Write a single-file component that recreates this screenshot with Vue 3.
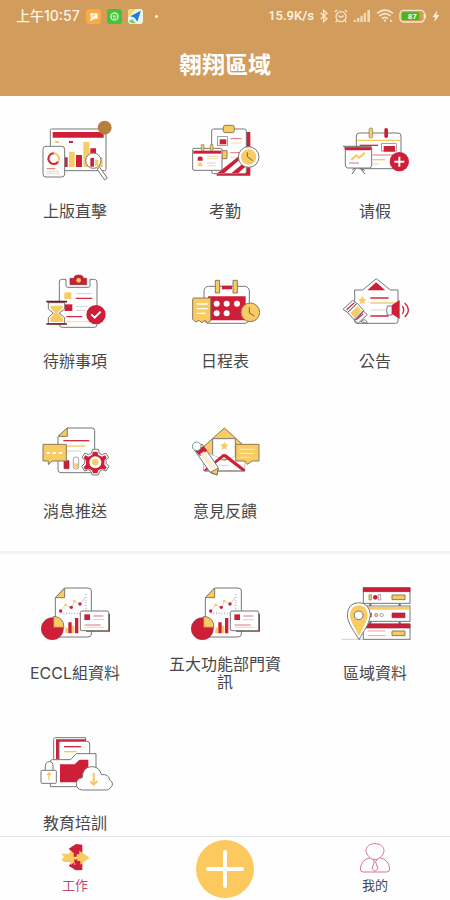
<script setup>
import { ref } from 'vue'

const tab = ref('work')
const reports = ['ECCL組資料', '五大功能部門資訊']
</script>

<template>
  <div class="app">
    <header class="top">
      <div class="status">
        <div class="status-side">
          <span class="clock">上午10:57</span>
          <svg class="chip" viewBox="0 0 42 42" aria-hidden="true">
            <rect width="42" height="42" rx="9" fill="#fbab45" />
            <path d="M11 12h22v15h-8l-9 5-6 2 4-8z" fill="#fff6e6" />
            <path d="M16 21l9-5" stroke="#fbc67c" stroke-width="3" />
          </svg>
          <svg class="chip" viewBox="0 0 42 42" aria-hidden="true">
            <rect width="42" height="42" rx="9" fill="#45c13c" />
            <circle cx="21" cy="21" r="10" fill="none" stroke="#c9f3c0" stroke-width="4" />
            <path d="M16 20h10M17 25h8" stroke="#c9f3c0" stroke-width="3" />
          </svg>
          <svg class="chip" viewBox="0 0 42 42" aria-hidden="true">
            <rect width="42" height="42" rx="9" fill="#eef5ee" />
            <path d="M0 12Q0 0 12 0h10L0 24z" fill="#f3dc62" />
            <path d="M2 34l10-6 10 12H10z" fill="#79cf6e" />
            <path d="M36 5L6 20l12 4 8 12z" fill="#1f7be0" />
          </svg>
          <span class="dot"></span>
        </div>
        <div class="status-side right">
          <span class="speed">15.9K/s</span>
          <svg class="sig bt" viewBox="0 0 30 42" aria-hidden="true">
            <path d="M5 12l19 17-10 9V4l10 9L5 30" />
          </svg>
          <svg class="sig" viewBox="0 0 42 42" aria-hidden="true">
            <circle cx="21" cy="23" r="15" />
            <path d="M13 20l8 5 8-5M2 9l8-6M40 9l-8-6M9 35l-4 5M33 35l4 5" />
          </svg>
          <svg class="bars" viewBox="0 0 54 42" aria-hidden="true">
            <path d="M2 33h7v6H2zM12 27h7v12h-7zM22 20h7v19h-7zM32 12h7v27h-7zM43 3h8v36h-8z" />
          </svg>
          <svg class="sig wifi" viewBox="0 0 54 42" aria-hidden="true">
            <path d="M3 13q24-19 48 0M10 21q17-14 34 0M18 29q9-8 18 0" />
            <path d="M27 30l4 5-4 4-4-4zM44 30l6 8h-9z" class="solid" />
          </svg>
          <svg class="battery" viewBox="0 0 84 42" aria-hidden="true">
            <rect x="3" y="4" width="73" height="35" rx="11" class="case" />
            <path d="M79 15v13" class="case" />
            <rect x="9" y="10" width="52" height="23" rx="4" fill="#49b71c" />
            <text x="40" y="31" text-anchor="middle">87</text>
          </svg>
          <svg class="bolt" viewBox="0 0 24 42" aria-hidden="true">
            <path d="M16 4L2 24h8L7 39l15-21h-9z" />
          </svg>
        </div>
      </div>
      <h1>翱翔區域</h1>
    </header>

    <main>
      <section class="grid">
        <button type="button" class="cell">
          <svg class="icon" viewBox="45 15 240 210" aria-hidden="true">
            <rect x="91" y="57" width="167" height="125" rx="4" class="o" />
            <path d="M98 66h153v17H98z" class="r" />
            <path d="M105 93h12v6h-12zM147 125h17v46h-17zM190 96h18v75h-18z" class="y" />
            <path d="M147 93h12v6h-12zM133 142h10v29h-10zM168 135h18v36h-18zM211 115h17v56h-17z" class="r" />
            <path d="M232 142h16v29h-16z" class="y" />
            <circle cx="220" cy="152" r="23" class="o" />
            <path d="M211 144h11v26h-11z" class="r" /><path d="M225 149h10v18h-10z" class="y" />
            <path d="M231 177l8-5 23 32-8 6z" class="o" />
            <rect x="69" y="109" width="65" height="92" rx="9" class="o" />
            <circle cx="101" cy="146" r="16" class="yl thick" />
            <path d="M101 130a16 16 0 1 0 13 26" class="rl thick" />
            <path d="M80 176h26" class="rl thin" /><path d="M80 184h38M80 190h38" class="yl thin" />
            <circle cx="254" cy="53" r="21" fill="#b77f3d" />
          </svg>
          <span class="label">上版直擊</span>
        </button>

        <button type="button" class="cell">
          <svg class="icon" viewBox="45 15 240 210" aria-hidden="true">
            <path d="M228 66h13v131H140v-8h88z" class="r" />
            <rect x="125" y="57" width="104" height="134" rx="6" class="o" />
            <path d="M143 189l64-51h15l-59 51zM185 189l40-34v17l-20 17z" class="r" />
            <rect x="160" y="46" width="33" height="22" rx="6" class="yo" />
            <rect x="142" y="80" width="30" height="27" class="o thin" /><path d="M149 88h20v15h-20z" class="r" />
            <path d="M153 122h18v24h-18z" class="yo" />
            <path d="M181 86h34M181 128h30" class="rl thin" /><path d="M181 99h34M181 142h20" class="yl thin" />
            <rect x="68" y="115" width="88" height="66" rx="4" class="o" />
            <path d="M70 122h84v9H70z" class="r" />
            <path d="M94 104h8v17h-8zM121 104h8v17h-8z" class="yo thin" />
            <path d="M83 143q7-9 15 0v9H83z" class="r" /><path d="M82 169q8-24 16 0z" class="y" />
            <path d="M111 139h34M111 159h26" class="gl" /><path d="M111 146h34M111 167h26" class="yl thin" />
            <circle cx="236" cy="141" r="31" class="o" /><circle cx="236" cy="141" r="23" class="y" />
            <path d="M232 127v13l16 12" class="dl" />
          </svg>
          <span class="label">考勤</span>
        </button>

        <button type="button" class="cell">
          <svg class="icon" viewBox="45 15 240 210" aria-hidden="true">
            <rect x="109" y="69" width="134" height="107" rx="9" class="o" />
            <path d="M111 91h130" class="yl" />
            <rect x="147" y="54" width="11" height="30" rx="5" class="yo thin" />
            <rect x="193" y="54" width="11" height="30" rx="5" class="r" />
            <path d="M119 106h55" class="rl" /><path d="M158 135h70" class="rl thin" />
            <path d="M158 149h38" class="yl" /><path d="M158 162h18" class="gl" />
            <rect x="184" y="101" width="45" height="22" class="o thin" /><path d="M191 108h34v17h-34z" class="r" />
            <path d="M97 179l13-7-14 20M121 175l14 17M125 178l9 3" class="dl" />
            <path d="M76 114h79v54l-5 6H81l-5-6z" class="o" />
            <path d="M72 112h84l-4 9H76z" class="r" /><path d="M69 109h86" class="dl" />
            <path d="M94 150l15-14 8 7 18-15" class="yl thick" />
            <path d="M87 159h30" class="rl thin" />
            <circle cx="238" cy="155" r="29" class="r" />
            <path d="M238 140v30M223 155h30" class="wl thick" />
          </svg>
          <span class="label">请假</span>
        </button>

        <button type="button" class="cell">
          <svg class="icon" viewBox="45 0 240 210" aria-hidden="true">
            <path d="M138 43h-13q-7 0-7 8v128q0 8 9 8h96q8 0 8-8V51q0-8-8-8h-13v19q0 5-6 5h-60q-6 0-6-5z" class="o" />
            <path d="M150 40h12q0-10 14-10t14 10h10v19h-50z" class="r edge" />
            <circle cx="176" cy="46" r="7" class="y" />
            <path d="M133 82h21v20h-21z" class="y" /><path d="M134 118h23v20h-23z" class="r" />
            <path d="M167 86h50M167 124h36M167 136h30" class="gl" />
            <path d="M167 100h50M139 155h48" class="rl" /><path d="M139 170h64" class="yl thin" />
            <path d="M85 113h49v19l-16 12 16 14v18H85v-18l15-14-15-12z" class="o" />
            <path d="M91 122h38q-2 12-16 20l16 18v11H91v-11l14-18q-12-8-14-20z" class="y" />
            <path d="M79 110h62M79 177h62" class="ml" />
            <circle cx="228" cy="149" r="29" class="r" />
            <path d="M214 148l10 10 18-18" class="wl thick" />
          </svg>
          <span class="label">待辦事項</span>
        </button>

        <button type="button" class="cell">
          <svg class="icon" viewBox="495 0 240 210" aria-hidden="true">
            <rect x="552" y="64" width="136" height="111" rx="14" class="o" />
            <path d="M606 62h30v11h-30z" class="r" />
            <path d="M586 46h13v38h-13zM639 46h13v38h-13z" class="yo" />
            <path d="M564 94h113v72H564z" class="r" />
            <circle cx="590" cy="116" r="9" class="w" /><circle cx="620" cy="116" r="9" class="w" />
            <circle cx="651" cy="116" r="9" class="w" /><circle cx="590" cy="145" r="9" class="w" />
            <circle cx="620" cy="145" r="9" class="w" />
            <path d="M518 103q0-4 4-4h50v69l-9 5-8-7-9 7-9-7-9 5-10-8z" class="yo" />
            <path d="M530 117h33M530 131h33M530 145h27" class="wl" />
            <circle cx="691" cy="142" r="28" class="yo" />
            <path d="M688 127v17l15 9" class="dl" />
          </svg>
          <span class="label">日程表</span>
        </button>

        <button type="button" class="cell">
          <svg class="icon" viewBox="45 0 240 210" aria-hidden="true">
            <path d="M104 75h24l41-34 42 34h23v93q0 7-7 7H111q-7 0-7-7z" class="o" />
            <path d="M168 52l28 24h-54z" class="r" />
            <path d="M151 99h55M151 153h55" class="rl" /><path d="M151 114h80" class="yl" /><path d="M151 135h48" class="gl" />
            <path d="M127 93l4 8 8 1-6 6 2 9-8-4-8 4 2-9-6-6 8-1z" class="y" />
            <path d="M69 133l29-27 12 9-27 27zM83 143l29-28 20 23-28 28zM101 164l28-26 13 11-28 26z" class="o" />
            <path d="M80 134l23-21" class="rl" /><path d="M91 144l21-20 13 14-21 20z" class="y" /><path d="M108 164l22-18" class="rl" />
            <path d="M122 170q15-14 20 5z" class="o" />
            <path d="M202 123h14v27h-14q-4-13 0-27z" class="o" /><path d="M216 120l23-15v57l-23-15z" class="r" />
            <path d="M247 123q8 11 0 24M254 114q22 22 0 42" class="rl" />
          </svg>
          <span class="label">公告</span>
        </button>

        <button type="button" class="cell">
          <svg class="icon" viewBox="45 0 240 210" aria-hidden="true">
            <path d="M141 39h75q8 0 8 8v117q0 9-8 9h-93q-9 0-9-9V65z" class="o" />
            <path d="M142 39v25h-28z" class="yo" />
            <path d="M130 77h78" class="rl" /><path d="M130 93h67" class="yl" /><path d="M139 108h44" class="gl" />
            <path d="M132 137h15v24h-15z" class="r edge" />
            <rect x="160" y="126" width="16" height="36" rx="7" class="o thin" /><path d="M163 145h11v13h-11z" class="y" />
            <path d="M69 88h70v50h-43l-11 11v-11H69z" class="yo" />
            <path d="M80 114h10M98 114h10M116 114h10" class="wl thick" />
            <path d="M218 103h17l3 12 9 4 10-5 9 13-8 9v9l9 9-9 14-11-4-8 5-4 11h-18l-4-11-8-5-11 4-9-14 9-9v-9l-8-9 9-13 10 5 9-4z" class="o" />
            <path d="M219 110h13l3 10 11 5 9-4 5 7-7 9v12l7 8-5 7-9-3-11 5-3 9h-13l-3-9-11-5-9 3-5-7 7-8v-12l-7-9 5-7 9 4 11-5z" class="r" />
            <circle cx="226" cy="142" r="18" class="w" /><circle cx="226" cy="142" r="10" class="y" />
          </svg>
          <span class="label">消息推送</span>
        </button>

        <button type="button" class="cell">
          <svg class="icon" viewBox="495 0 240 210" aria-hidden="true">
            <path d="M552 94l61-55 61 55v73H552z" class="yo" />
            <path d="M578 71h68v62h-68z" class="o" />
            <path d="M613 80l4 8 9 1-7 6 2 9-8-4-8 4 2-9-7-6 9-1z" class="y" />
            <path d="M552 108l61 31 61-31v59H552z" class="w" />
            <path d="M549 107l46 20 18 10 61-25" class="gl" />
            <path d="M549 167l60-50 9 1 57 45v5h-8l-55-42-53 41z" class="r" />
            <path d="M554 168h121" class="dl" /><path d="M597 151h30" class="gl" />
            <path d="M522 104l24-17 49 71-4 22-19-6z" class="o" />
            <path d="M526 108l24-15 12 14-22 16z" class="r" /><path d="M540 117l12-8 33 44-12 9z" fill="#fff0cf" />
            <path d="M572 171l22-11-3 20z" class="yo" />
            <circle cx="530" cy="94" r="13" class="o green" />
            <path d="M647 88h70v50h-20l-15 10-7-10h-28z" class="yo" />
            <path d="M658 103h46M658 115h42M658 127h34" class="wl thin" />
          </svg>
          <span class="label">意見反饋</span>
        </button>
      </section>

      <hr class="divider" />

      <section class="grid second">
        <button v-for="name in reports" :key="name" type="button" class="cell">
          <svg class="icon" viewBox="45 6 240 210" aria-hidden="true">
            <path d="M134 39h70q10 0 10 9v129q0 9-10 9h-89q-9 0-9-9V68z" class="o" />
            <path d="M134 39v29h-28z" class="yo" />
            <path d="M122 115h82M197 58v57" class="gl dash" />
            <path d="M122 108l15-18 17 7 10-18 17 8 14-20" class="gl thin" />
            <circle cx="122" cy="108" r="5" class="r" /><circle cx="154" cy="97" r="5" class="r" /><circle cx="180" cy="87" r="5" class="r" />
            <circle cx="137" cy="90" r="4" class="y" /><circle cx="163" cy="78" r="4" class="y" />
            <path d="M136 158h8v17h-8zM154 152h9v23h-9z" class="y" />
            <path d="M145 142h10v33h-10zM165 129h10v46h-10z" class="r" />
            <circle cx="97" cy="161" r="33" class="r edge" />
            <path d="M101 157V124q30 2 31 33z" class="yo" />
            <path d="M205 116h65v54h-72v-5h66z" class="r" />
            <rect x="181" y="108" width="85" height="59" rx="5" class="o" />
            <path d="M193 118h17v17h-17z" class="r" />
            <path d="M220 123h30M194 150h48" class="rl thin" /><path d="M218 134h34" class="gl" /><path d="M194 157h58" class="yl thin" />
          </svg>
          <span class="label">{{ name }}</span>
        </button>

        <button type="button" class="cell">
          <svg class="icon" viewBox="45 6 240 210" aria-hidden="true">
            <path d="M151 84v12M239 84v12M151 138v12M239 138v12" class="dl thick" />
            <rect x="130" y="39" width="140" height="46" class="o" /><path d="M130 38h140v12H130z" class="r edge" />
            <rect x="130" y="93" width="140" height="46" class="o" /><path d="M132 95h136v9H132z" class="y" />
            <rect x="130" y="147" width="140" height="46" class="o" /><path d="M130 147h140v12H130z" class="r edge" />
            <path d="M147 59h7v16h-7z" class="yo thin" /><circle cx="166" cy="67" r="7" class="r" /><path d="M175 59h7v16h-7z" class="o thin" />
            <path d="M216 60h39v14h-39z" class="yo" /><path d="M216 114h39v14h-39z" class="r edge" /><path d="M216 168h39v14h-39z" class="yo" />
            <path d="M150 113h5v14h-5z" class="r" /><circle cx="169" cy="120" r="5" class="yo thin" /><circle cx="185" cy="120" r="5" class="o thin" />
            <path d="M143 168h54M143 182h54" class="rl pale" />
            <path d="M65 193h65" class="gl" />
            <path d="M117 194C103 169 82 145 82 119Q84 84 116 83q32 1 35 36c-2 28-21 50-34 75z" class="o" />
            <path d="M117 184C107 160 90 140 90 120q2-28 26-29 25 1 27 29c-1 20-16 40-26 64z" class="y" />
            <circle cx="116" cy="121" r="13" class="o" />
          </svg>
          <span class="label">區域資料</span>
        </button>

        <button type="button" class="cell">
          <svg class="icon" viewBox="45 6 240 210" aria-hidden="true">
            <path d="M101 103V43q0-5 6-5h90v13" class="o" />
            <path d="M108 103V43h89v8h-78v52z" class="r" />
            <path d="M117 107V54q0-5 5-5h78q9 0 9 8v40" class="o" />
            <path d="M132 65h51" class="rl" /><path d="M132 80h38" class="yl" />
            <path d="M91 110q0-6 6-6h55l16-18h60v99H91z" class="o" />
            <path d="M120 118h44l14-14h27v68h-85z" class="r" />
            <path d="M76 136v-13q1-13 12-13t11 13v13" class="o" />
            <rect x="63" y="136" width="46" height="39" rx="3" class="o" />
            <path d="M87 145v20M81 150l6-6 6 6" class="yl" />
            <path d="M187 195q-18-2-18-19 1-16 18-18 0-31 27-33 24-1 30 24 22-3 25 16 17 11 1 24-3 6-10 6z" class="o" />
            <path d="M221 143v34M211 169l10 10 11-10" class="yl thick" />
          </svg>
          <span class="label">教育培訓</span>
        </button>
      </section>
    </main>

    <nav class="tabs">
      <button type="button" class="tab" :class="{ active: tab === 'work' }" @click="tab = 'work'">
        <svg class="tab-icon" viewBox="0 0 90 90" aria-hidden="true">
          <path d="M26 17L48 3l19 2v29L53 44l14 10v27l-20 1-21-14 14-13V31z" class="r" />
          <path d="M4 32h24l5-9 11 11h14V23l31 21-28 21V54H47L34 65l-6-8H13L4 51l8-9z" class="y" />
          <path d="M41 33h9v8h-9zM43 49h9v8h-9z" class="r" />
          <path d="M47 42v8M44 59v7" class="wl thin" />
        </svg>
        <span>工作</span>
      </button>
      <button type="button" class="add" aria-label="新增">
        <svg viewBox="0 0 58 58" aria-hidden="true">
          <path d="M29 12v34M12 29h34" />
        </svg>
      </button>
      <button type="button" class="tab" :class="{ active: tab === 'me' }" @click="tab = 'me'">
        <svg class="tab-icon" viewBox="0 0 90 90" aria-hidden="true">
          <g class="person">
            <path d="M30 44C8 25 19 2 45 2s37 23 15 42q27 7 29 34 0 9-9 9H10q-9 0-9-9 2-27 29-34z" />
            <path d="M30 44l11 7M60 44l-11 7M40 49h10l-3 8 7 20-9 8-9-8 7-20z" />
          </g>
        </svg>
        <span>我的</span>
      </button>
    </nav>
  </div>
</template>

<style>
body {
  margin: 0;
  background: #fefefe;
}
</style>

<style scoped>
.app {
  display: flex;
  flex-direction: column;
  height: 100vh;
  background: #fefefe;
  color: #484848;
  font-family: Inter, "Noto Sans CJK TC", "Noto Sans CJK SC", sans-serif;
}
button {
  border: 0;
  padding: 0;
  background: none;
  color: inherit;
  font: inherit;
  cursor: pointer;
}
.top {
  flex: none;
  background: #d19c5c;
  color: #fff;
  padding-bottom: 14px;
}
.status {
  display: flex;
  justify-content: space-between;
  align-items: center;
  height: 32px;
  padding: 0 10px 0 16px;
  color: #fff4e2;
}
.status-side {
  display: flex;
  align-items: center;
  gap: 6px;
}
.right {
  gap: 5px;
}
.clock {
  font: 500 14px/20px Inter, "Noto Sans CJK TC", sans-serif;
}
.speed {
  font: 500 13px/20px Roboto, sans-serif;
}
.chip {
  width: 15px;
  height: 15px;
}
.dot {
  width: 3px;
  height: 3px;
  margin-left: 6px;
  border-radius: 50%;
  background: #fff4e2;
}
.sig {
  width: 14px;
  height: 14px;
  fill: none;
  stroke: #f8e6cd;
  stroke-width: 4;
}
.bt {
  width: 10px;
}
.wifi {
  width: 18px;
  stroke-width: 5;
}
.solid {
  fill: #f8e6cd;
  stroke: none;
}
.bars {
  width: 18px;
  height: 14px;
  fill: #f0d9b9;
}
.battery {
  width: 28px;
  height: 14px;
}
.battery text {
  fill: #f3ffe9;
  font: 700 24px Roboto, sans-serif;
}
.case {
  fill: none;
  stroke: #f8e6cd;
  stroke-width: 4;
}
.bolt {
  width: 8px;
  height: 14px;
  fill: #fff4e2;
}
h1 {
  margin: 0;
  padding-top: 16px;
  font-size: 23px;
  line-height: 34px;
  font-weight: 700;
  text-align: center;
}
main {
  flex: 1;
  min-height: 0;
  overflow-y: auto;
  scrollbar-width: none;
}
.grid {
  display: grid;
  grid-template-columns: repeat(3, 1fr);
  row-gap: 36px;
  padding: 19px 0 22px;
}
.second {
  padding-top: 23px;
}
.divider {
  height: 3px;
  margin: 0;
  border: 0;
  background: #f2f2f2;
}
.cell {
  display: flex;
  flex-direction: column;
  align-items: center;
  gap: 8px;
}
.icon {
  width: 80px;
  height: 70px;
}
.label {
  display: flex;
  align-items: center;
  justify-content: center;
  height: 36px;
  max-width: 120px;
  font-size: 16px;
  line-height: 18px;
  text-align: center;
}
.o {
  fill: #fff;
  stroke: #777;
  stroke-width: 3;
}
.yo {
  fill: #f8cb63;
  stroke: #8b7a58;
  stroke-width: 3;
}
.y {
  fill: #f8cb63;
}
.r {
  fill: #cf1f38;
}
.w {
  fill: #fff;
}
.edge {
  stroke: #8a2f3a;
  stroke-width: 2;
}
.green {
  stroke: #7e9a90;
}
.rl,
.yl,
.gl,
.dl,
.wl,
.ml {
  fill: none;
  stroke-width: 4;
}
.rl {
  stroke: #cf2b43;
}
.yl {
  stroke: #f8c65a;
}
.gl {
  stroke: #bbb;
  stroke-width: 2;
}
.dl {
  stroke: #666;
  stroke-width: 3;
}
.wl {
  stroke: #fff;
}
.ml {
  stroke: #6b1a27;
  stroke-width: 5;
}
.thin {
  stroke-width: 2;
}
.thick {
  stroke-width: 6;
}
.pale {
  stroke: #eba49a;
  stroke-width: 3;
}
.dash {
  stroke-width: 5;
  stroke-dasharray: 3 5;
}
.tabs {
  flex: none;
  display: grid;
  grid-template-columns: repeat(3, 1fr);
  justify-items: center;
  align-items: center;
  height: 63px;
  border-top: 1px solid #e4e4e4;
  background: #fefefe;
}
.tab {
  display: flex;
  flex-direction: column;
  align-items: center;
  gap: 3px;
  font-size: 13px;
  line-height: 18px;
}
.active {
  color: #c2476a;
}
.tab-icon {
  width: 30px;
  height: 30px;
}
.person {
  fill: none;
  stroke: #d4778a;
  stroke-width: 3;
}
.add {
  width: 58px;
  height: 58px;
  border-radius: 50%;
  background: #fbc95d;
}
.add svg {
  display: block;
  fill: none;
  stroke: #fff;
  stroke-width: 4;
  stroke-linecap: round;
}
</style>
